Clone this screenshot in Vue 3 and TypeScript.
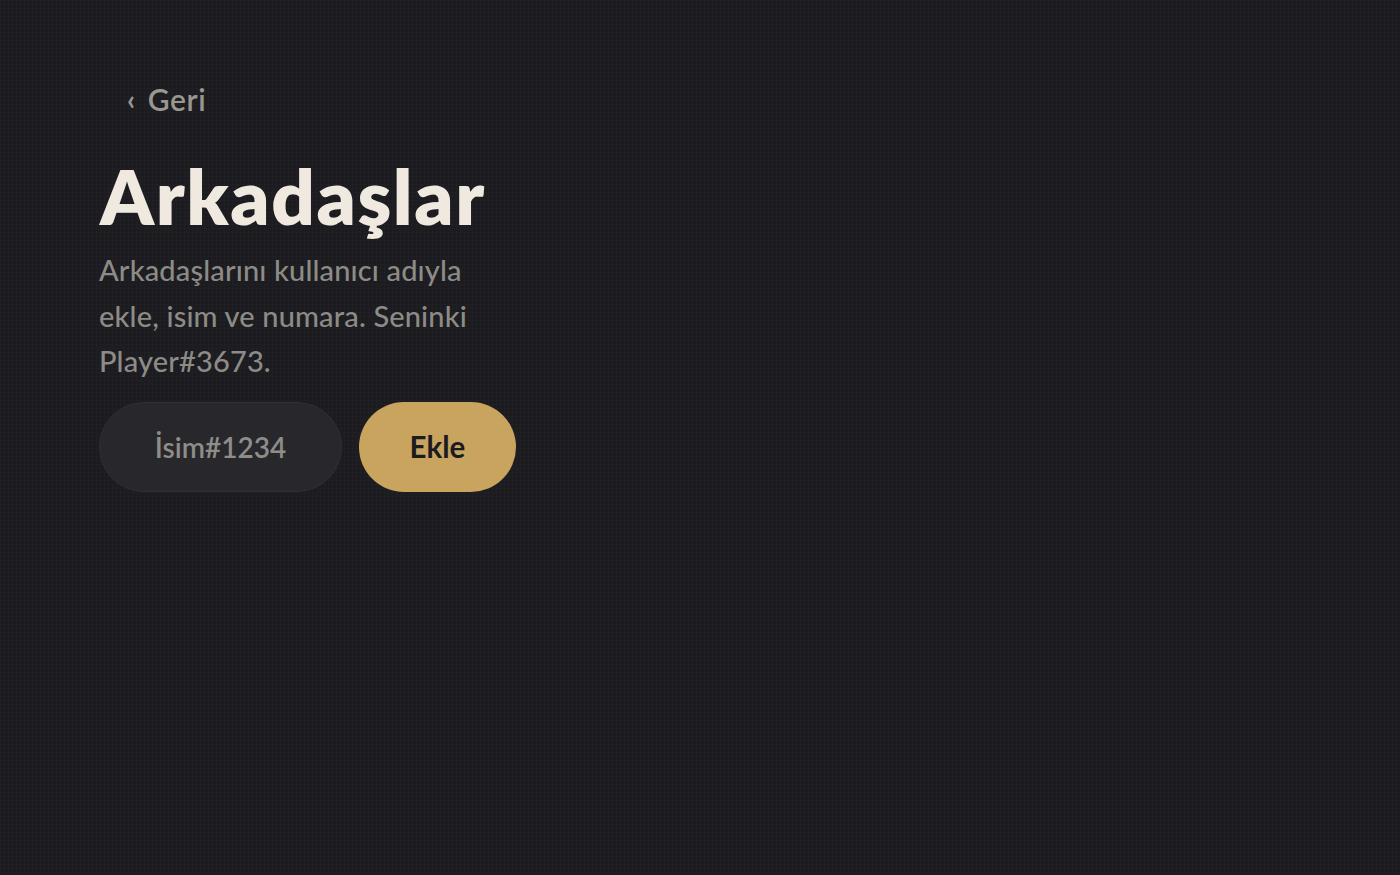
<script setup lang="ts">
const title = 'Arkadaşlar'
</script>

<template>
  <main class="page">
    <section class="panel">
      <button class="back" type="button"><span class="chev">‹</span><span>Geri</span></button>
      <h1 class="title">{{ title }}</h1>
      <p class="desc">Arkadaşlarını kullanıcı adıyla ekle, isim ve numara. Seninki Player#3673.</p>
      <form class="row" @submit.prevent>
        <input class="field" type="text" placeholder="İsim#1234" />
        <button class="add" type="submit">Ekle</button>
      </form>
    </section>
  </main>
</template>

<style>
html, body { margin: 0; background: #1b1b20; }
</style>

<style scoped>
.page {
  box-sizing: border-box;
  width: 1400px;
  height: 875px;
  padding: 78px 99px;
  background-color: #1b1b20;
  background-image:
    linear-gradient(rgba(255,255,255,0.012) 1px, transparent 1px),
    linear-gradient(90deg, rgba(255,255,255,0.012) 1px, transparent 1px);
  background-size: 4px 4px;
  font-family: "Lato", "Noto Sans", sans-serif;
}
.panel { width: 417px; display: flex; flex-direction: column; }
.back {
  align-self: flex-start;
  display: flex;
  align-items: center;
  gap: 12px;
  height: 42px;
  padding: 0 0 0 28px;
  background: none;
  border: 0;
  color: #9a9791;
  font: 600 30px "Lato", sans-serif;
  letter-spacing: 0.6px;
}
.chev { font-size: 28px; font-weight: 700; }
.title {
  margin: 31px 0 0 1px;
  color: #efe9df;
  font-size: 76px;
  line-height: 90px;
  font-weight: 800;
  letter-spacing: 1.6px;
}
.desc {
  margin: 6px 0 0;
  width: 390px;
  color: #8d8b86;
  font-size: 29px;
  font-weight: 500;
  line-height: 45.6px;
  letter-spacing: 0.15px;
}
.row { display: flex; gap: 17px; margin-top: 18px; }
.field {
  box-sizing: border-box;
  width: 243px;
  height: 90px;
  border: 1px solid #303034;
  border-radius: 45px;
  background: #28282c;
  text-align: center;
  color: #8f8d89;
  font: 600 28px "Lato", sans-serif;
  outline: none;
}
.field::placeholder { color: #8f8d89; opacity: 1; }
.add {
  width: 157px;
  height: 90px;
  border: 0;
  border-radius: 45px;
  background: #c9a45f;
  color: #1b1b20;
  font: 700 29.5px "Lato", sans-serif;
}
</style>
